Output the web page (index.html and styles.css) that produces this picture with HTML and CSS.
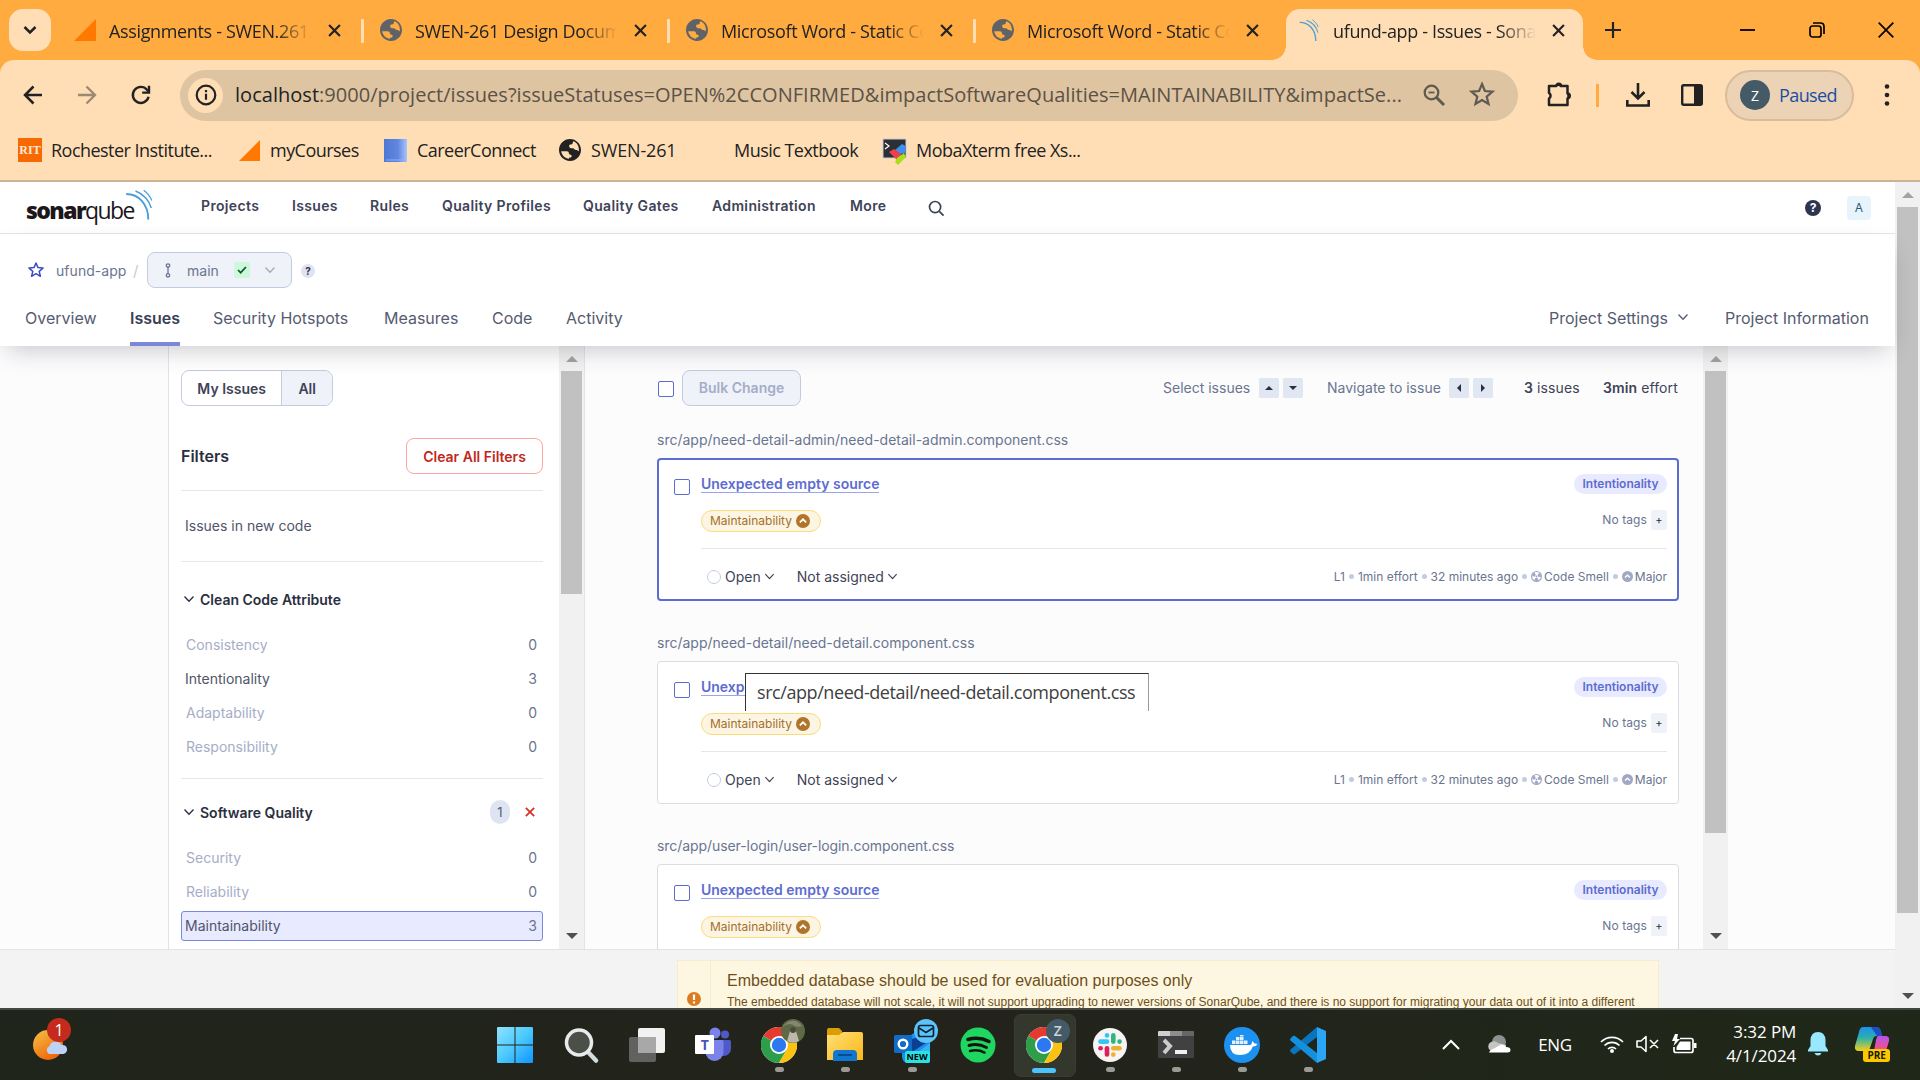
FILE: index.html
```
<!DOCTYPE html>
<html lang="en">
<head>
<meta charset="utf-8">
<title>ufund-app - Issues - SonarQube</title>
<link rel="stylesheet" href="styles.css">
</head>
<body>
<svg class="defs" width="0" height="0" aria-hidden="true">
  <defs>
    <linearGradient id="gSun" x1="0" y1="0" x2=".6" y2="1"><stop offset="0" stop-color="#f6c244"/><stop offset="1" stop-color="#f0650a"/></linearGradient>
    <linearGradient id="gWin" gradientUnits="userSpaceOnUse" x1="0" y1="0" x2="36" y2="36"><stop offset="0" stop-color="#8fe3ff"/><stop offset=".5" stop-color="#4cc9fd"/><stop offset="1" stop-color="#0f95ff"/></linearGradient>
    <linearGradient id="gFolder" x1="0" y1="0" x2="1" y2="1"><stop offset="0" stop-color="#ffdf7a"/><stop offset="1" stop-color="#fbb813"/></linearGradient>
    <linearGradient id="gCop1" x1="0" y1="0" x2="0" y2="1"><stop offset="0" stop-color="#1b8ff5"/><stop offset=".45" stop-color="#2db0a8"/><stop offset="1" stop-color="#f5d020"/></linearGradient>
    <linearGradient id="gCop2" x1="0" y1="0" x2="0" y2="1"><stop offset="0" stop-color="#b355f0"/><stop offset=".6" stop-color="#f0508c"/><stop offset="1" stop-color="#ff9a3c"/></linearGradient>
    <linearGradient id="gCareer" x1="0" y1="0" x2="1" y2="0"><stop offset="0" stop-color="#4f78d6"/><stop offset=".6" stop-color="#5f86e0"/><stop offset="1" stop-color="#a9c4fb"/></linearGradient>
    <symbol id="globe" viewBox="2 2 20 20"><path d="M12 2C6.480 2 2 6.480 2 12s4.480 10 10 10 10-4.480 10-10S17.520 2 12 2zm8.100 10c0 .4-.1.9-.2 1.300-.6-.8-1.400-1.300-2.400-1.300-1.200 0-1.700-1.700-3-1.700h-1.500c-1 0-1.800-.9-1.800-1.900 0-1 .8-1.400 1.800-1.400.9 0 1.500-.6 1.500-1.500 0-.6.2-1.100.6-1.500 2.900 1 5 3.700 5 8zM4 13.200h5.200c1.200 0 1.800.8 1.800 1.800 0 .8.700 1.300 1.500 1.300.8 0 1 .7 1 1.400 0 .9-.7 1.200-1.500 1.200-.7 0-.9.5-.9 1.100C7.400 19.700 4.500 16.900 4 13.200z"/></symbol>
    <symbol id="x" viewBox="0 0 12 12"><path d="M1 1l10 10M11 1L1 11" fill="none" stroke="currentColor" stroke-width="2"/></symbol>
    <symbol id="chev" viewBox="0 0 12 12"><path d="M1.500 3.500L6 8.300l4.500-4.800" fill="none" stroke="currentColor" stroke-width="1.300"/></symbol>
    <symbol id="waves" viewBox="0 0 24 26"><g fill="none" stroke="#4b9fd5" stroke-width="1.600"><path d="M1 4C12 4 20 13 20 26"/><path d="M9 1.500C16 4 21 10 22.500 16" stroke-width="1.300"/><path d="M16 .8C19 3 21.500 6 23 9.500" stroke-width="1.100"/></g></symbol>
    <symbol id="chrome" viewBox="0 0 36 36"><circle cx="18" cy="18" r="18" fill="#fff"/><path d="M18 18L2.400 9A18 18 0 0 1 33.600 9H18z" fill="#e53a2f"/><path d="M18 18L2.400 9A18 18 0 0 0 18 36l7.800-13.500z" fill="#2f9e4a"/><path d="M18 9h15.600A18 18 0 0 1 18 36l7.800-13.500z" fill="#fcc212"/><circle cx="18" cy="18" r="9" fill="#fff"/><circle cx="18" cy="18" r="7.200" fill="#2b78f0"/></symbol>
    <symbol id="up" viewBox="0 0 14 14"><circle cx="7" cy="7" r="7" fill="currentColor"/><path d="M3.800 8.400L7 5.300l3.200 3.100" fill="none" stroke="#fff" stroke-width="1.700"/></symbol>
    <symbol id="smell" viewBox="0 0 12 12"><circle cx="6" cy="6" r="5.400" fill="none" stroke="currentColor" stroke-width="1.200"/><circle cx="6" cy="6" r="1" fill="currentColor"/><circle cx="6" cy="6" r="3.300" fill="none" stroke="currentColor" stroke-width="3.200" stroke-dasharray="3.456 3.456" transform="rotate(60 6 6)"/></symbol>
  </defs>
</svg>

<header class="browser">
  <div class="strip">
    <button class="tab-search"><svg width="14" height="14" viewBox="0 0 14 14"><path d="M1.500 4L7 9.500 12.500 4" fill="none" stroke="#222" stroke-width="2.500"/></svg></button>
    <div class="tab"><svg class="fav" viewBox="0 0 22 22"><path d="M0 22L22 0v22z" fill="#ff7900"/></svg><span class="tab-title">Assignments - SWEN.261.01</span><svg class="close"><use href="#x"/></svg></div>
    <div class="tab"><svg class="fav globe"><use href="#globe"/></svg><span class="tab-title">SWEN-261 Design Documentation</span><svg class="close"><use href="#x"/></svg></div>
    <div class="tab"><svg class="fav globe"><use href="#globe"/></svg><span class="tab-title">Microsoft Word - Static Code</span><svg class="close"><use href="#x"/></svg></div>
    <div class="tab last"><svg class="fav globe"><use href="#globe"/></svg><span class="tab-title">Microsoft Word - Static Code</span><svg class="close"><use href="#x"/></svg></div>
    <div class="tab active"><svg class="fav" viewBox="0 0 24 26"><use href="#waves"/></svg><span class="tab-title">ufund-app - Issues - SonarQube</span><svg class="close"><use href="#x"/></svg></div>
    <svg class="plus" viewBox="0 0 16 16"><path d="M8 0v16M0 8h16" stroke="#222" stroke-width="2.200"/></svg>
    <div class="win">
      <svg width="16" height="16" viewBox="0 0 16 16"><path d="M0 8h15" stroke="#000" stroke-width="1.800"/></svg>
      <svg width="16" height="16" viewBox="0 0 16 16"><g fill="none" stroke="#000" stroke-width="1.700"><rect x="1" y="4" width="11" height="11" rx="2.500"/><path d="M4 1h7.500Q15 1 15 4.500V12"/></g></svg>
      <svg width="16" height="16" viewBox="0 0 16 16"><path d="M.7.7l14.600 14.600M15.300.7L.7 15.300" stroke="#000" stroke-width="1.700"/></svg>
    </div>
  </div>

  <div class="chrome-body">
    <div class="toolbar">
      <svg class="nav-ico" viewBox="0 0 20 20"><path d="M19 10H2.500M10.500 1.500L2 10l8.500 8.500" fill="none" stroke="#222" stroke-width="2.500"/></svg>
      <svg class="nav-ico dim" viewBox="0 0 20 20"><path d="M1 10h16.500M9.500 1.500L18 10l-8.500 8.500" fill="none" stroke="#222" stroke-width="2.300"/></svg>
      <svg class="nav-ico" viewBox="0 0 20 20"><path d="M17.600 11.800A8 8 0 1 1 16 4.800L18 7" fill="none" stroke="#222" stroke-width="2.400"/><path d="M19.200.8v8h-8V6.400h5.600V.8z" fill="#222"/></svg>
      <div class="omnibox">
        <span class="site-info"><svg width="22" height="22" viewBox="0 0 22 22"><circle cx="11" cy="11" r="9.300" fill="none" stroke="#222" stroke-width="2.200"/><path d="M11 9.700v6M11 6v2.200" stroke="#222" stroke-width="2.200"/></svg></span>
        <span class="url"><b>localhost</b>:9000/project/issues?issueStatuses=OPEN%2CCONFIRMED&amp;impactSoftwareQualities=MAINTAINABILITY&amp;impactSe...</span>
        <svg class="o-zoom" viewBox="0 0 22 22"><circle cx="8.500" cy="8.500" r="6.800" fill="none" stroke="#5f5a52" stroke-width="2.300"/><path d="M13.500 13.500l7.500 7.500" stroke="#5f5a52" stroke-width="3"/><path d="M5.500 8.500h6" stroke="#5f5a52" stroke-width="1.800"/></svg>
        <svg class="o-star" viewBox="0 0 24 24"><path d="M12 2l2.900 7 7.600.6-5.800 5 1.800 7.400L12 18l-6.500 4 1.800-7.400-5.800-5 7.600-.6z" fill="none" stroke="#5f5a52" stroke-width="2.200"/></svg>
      </div>
      <svg class="puzzle" viewBox="0 0 26 26"><path d="M3 5h7a3 3 0 0 1 5 0h6.500v7.500a3 3 0 0 1 0 5V24H3v-6.500a3.200 3.200 0 0 0 0-5.500z" fill="none" stroke="#222" stroke-width="2.500" stroke-linejoin="round"/><path d="M9.300 5a3.500 3.500 0 0 1 7 0zM21.500 11.200a3.500 3.500 0 0 1 0 7z" fill="#222"/></svg>
      <i class="tb-sep"></i>
      <svg class="download" viewBox="0 0 24 24"><path d="M12 0v15M5.500 9L12 15.500 18.500 9M1.300 17v5.500h21.400V17" fill="none" stroke="#222" stroke-width="2.600"/></svg>
      <svg class="side" viewBox="0 0 22 22"><rect x="1.200" y="1.200" width="19.600" height="19.600" rx="1.500" fill="none" stroke="#222" stroke-width="2.400"/><path d="M13 1h8v20h-8z" fill="#222"/></svg>
      <div class="profile"><span class="avatar">Z</span><span class="paused">Paused</span></div>
      <svg class="dots" viewBox="0 0 6 22"><g fill="#222"><circle cx="3" cy="2.500" r="2.300"/><circle cx="3" cy="11" r="2.300"/><circle cx="3" cy="19.500" r="2.300"/></g></svg>
    </div>
    <div class="bookmarks">
      <div class="bm b1"><span class="rit">RIT</span><span>Rochester Institute...</span></div>
      <div class="bm b2"><svg width="21" height="21" viewBox="0 0 22 22"><path d="M0 22L22 0v22z" fill="#ff7900"/></svg><span>myCourses</span></div>
      <div class="bm b3"><svg width="23" height="23" viewBox="0 0 23 23"><rect width="23" height="23" fill="url(#gCareer)"/><path d="M2 21h19" stroke="#8fb0f5"/></svg><span>CareerConnect</span></div>
      <div class="bm b4"><svg width="22" height="22" fill="#222"><use href="#globe"/></svg><span>SWEN-261</span></div>
      <div class="bm b5"><span>Music Textbook</span></div>
      <div class="bm b6"><svg width="23" height="23" viewBox="0 0 23 23"><path d="M0 0h23v19H0z" fill="#2c2f33" stroke="#c9ccd2"/><path d="M2 4l4 3-4 3" fill="none" stroke="#fff" stroke-width="1.200"/><path d="M12 11l7-6 4 2-1 7-5 1z" fill="#3f8ef0"/><path d="M6 13l5-3 8 6-4 6z" fill="#f0404a"/><path d="M14 19l7-5 2 4-8 8-3-3z" fill="#a5e01a"/></svg><span>MobaXterm free Xs...</span></div>
    </div>
  </div>
</header>

<main class="viewport">
  <div class="page">
    <nav class="sonar-nav">
      <div class="logo"><b>sonar</b><span>qube</span><svg width="28" height="33" viewBox="0 0 24 26"><use href="#waves"/></svg></div>
      <a class="n1">Projects</a><a class="n2">Issues</a><a class="n3">Rules</a><a class="n4">Quality Profiles</a><a class="n5">Quality Gates</a><a class="n6">Administration</a><a class="n7">More</a>
      <svg class="search" viewBox="0 0 18 18"><circle cx="7.500" cy="7.500" r="5.900" fill="none" stroke="#3e4357" stroke-width="1.800"/><path d="M12 12l4.500 4.500" stroke="#3e4357" stroke-width="1.900"/></svg>
      <span class="help">?</span>
      <span class="user">A</span>
    </nav>
    <section class="project-head">
      <div class="crumbs">
        <svg width="16" height="16" viewBox="0 0 16 16"><path d="M8 1l2 4.600 5 .5-3.800 3.300L12.400 14.300 8 11.700l-4.400 2.600 1.200-4.900L1 6.100l5-.5z" fill="none" stroke="#3d4ac4" stroke-width="1.500" stroke-linejoin="round"/></svg>
        <span class="proj">ufund-app</span><span class="slash">/</span>
        <div class="branch">
          <svg width="8" height="15" viewBox="0 0 8 15"><g fill="none" stroke="#6a7590" stroke-width="1.300"><circle cx="4" cy="2.500" r="1.700"/><circle cx="4" cy="12.300" r="1.700"/><path d="M4 4v7"/></g></svg>
          <span class="bname">main</span>
          <span class="ok"><svg width="10" height="8" viewBox="0 0 10 8"><path d="M1 4l2.700 2.700L9 1" fill="none" stroke="#0d5a30" stroke-width="1.700"/></svg></span>
          <svg class="bchev"><use href="#chev"/></svg>
        </div>
        <span class="qmark">?</span>
      </div>
      <div class="ptabs">
        <a class="p1">Overview</a><a class="p2 on">Issues</a><a class="p3">Security Hotspots</a><a class="p4">Measures</a><a class="p5">Code</a><a class="p6">Activity</a>
        <a class="p7">Project Settings</a><svg width="12" height="12"><use href="#chev"/></svg><a class="p8">Project Information</a>
      </div>
    </section>

    <div class="content">
      <aside class="side-panel">
        <div class="filters">
          <div class="toggle"><span>My Issues</span><span class="sel">All</span></div>
          <div class="filters-head"><b>Filters</b><button>Clear All Filters</button></div>
          <div class="new-code">Issues in new code</div>
          <div class="facet">
            <div class="facet-title"><svg width="12" height="12"><use href="#chev"/></svg><b>Clean Code Attribute</b></div>
            <div class="row off"><span>Consistency</span><i>0</i></div>
            <div class="row"><span>Intentionality</span><i>3</i></div>
            <div class="row off"><span>Adaptability</span><i>0</i></div>
            <div class="row off"><span>Responsibility</span><i>0</i></div>
          </div>
          <div class="facet second">
            <div class="facet-title"><svg width="12" height="12"><use href="#chev"/></svg><b>Software Quality</b><span class="count">1</span><svg class="clear" width="10" height="10"><use href="#x"/></svg></div>
            <div class="row off"><span>Security</span><i>0</i></div>
            <div class="row off"><span>Reliability</span><i>0</i></div>
            <div class="row picked"><span>Maintainability</span><i>3</i></div>
          </div>
        </div>
        <div class="sbar side-sb"><i class="au"></i><i class="thumb"></i><i class="ad"></i></div>
      </aside>

      <section class="issues">
        <div class="bulk">
          <span class="cb"></span><span class="bulk-btn">Bulk Change</span>
          <span class="lbl sel-l">Select issues</span><span class="key"><i class="k-up"></i></span><span class="key"><i class="k-dn"></i></span>
          <span class="lbl nav-l">Navigate to issue</span><span class="key"><i class="k-lf"></i></span><span class="key"><i class="k-rt"></i></span>
          <span class="tot"><b>3</b> issues</span><span class="eff"><b>3min</b> effort</span>
        </div>

        <div class="path">src/app/need-detail-admin/need-detail-admin.component.css</div>
        <article class="card current">
          <span class="cb"></span>
          <div class="card-body">
            <div class="r1"><a>Unexpected empty source</a><span class="attr">Intentionality</span></div>
            <div class="r2"><span class="pill">Maintainability<svg width="14" height="14"><use href="#up"/></svg></span><span class="tags">No tags</span><span class="add">+</span></div>
            <div class="r3"><i class="ring"></i><span>Open</span><svg width="11" height="11"><use href="#chev"/></svg><span class="assignee">Not assigned</span><svg width="11" height="11"><use href="#chev"/></svg>
              <div class="meta"><span>L1</span><i></i><span>1min effort</span><i></i><span>32 minutes ago</span><i></i><svg width="11" height="11"><use href="#smell"/></svg><span>Code Smell</span><i></i><svg width="11" height="11"><use href="#up"/></svg><span>Major</span></div></div>
          </div>
        </article>

        <div class="path">src/app/need-detail/need-detail.component.css</div>
        <article class="card">
          <span class="cb"></span>
          <div class="card-body">
            <div class="r1"><a>Unexpected empty source</a><span class="attr">Intentionality</span></div>
            <div class="r2"><span class="pill">Maintainability<svg width="14" height="14"><use href="#up"/></svg></span><span class="tags">No tags</span><span class="add">+</span></div>
            <div class="r3"><i class="ring"></i><span>Open</span><svg width="11" height="11"><use href="#chev"/></svg><span class="assignee">Not assigned</span><svg width="11" height="11"><use href="#chev"/></svg>
              <div class="meta"><span>L1</span><i></i><span>1min effort</span><i></i><span>32 minutes ago</span><i></i><svg width="11" height="11"><use href="#smell"/></svg><span>Code Smell</span><i></i><svg width="11" height="11"><use href="#up"/></svg><span>Major</span></div></div>
          </div>
          <div class="tooltip">src/app/need-detail/need-detail.component.css</div>
        </article>

        <div class="path login">src/app/user-login/user-login.component.css</div>
        <article class="card">
          <span class="cb"></span>
          <div class="card-body">
            <div class="r1"><a>Unexpected empty source</a><span class="attr">Intentionality</span></div>
            <div class="r2"><span class="pill">Maintainability<svg width="14" height="14"><use href="#up"/></svg></span><span class="tags">No tags</span><span class="add">+</span></div>
          </div>
        </article>
      </section>
      <div class="sbar main-sb"><i class="au"></i><i class="thumb"></i><i class="ad"></i></div>
    </div>

    <footer class="foot">
      <div class="warn">
        <div class="warn-ico"><svg width="14" height="14" viewBox="0 0 14 14"><circle cx="7" cy="7" r="7" fill="#dc7a1e"/><path d="M7 2.500v5.500M7 9.500v2" stroke="#fff" stroke-width="2.200"/></svg></div>
        <div class="warn-text"><h3>Embedded database should be used for evaluation purposes only</h3><p>The embedded database will not scale, it will not support upgrading to newer versions of SonarQube, and there is no support for migrating your data out of it into a different</p></div>
      </div>
    </footer>
  </div>
  <div class="sbar page-sb"><i class="au"></i><i class="thumb"></i><i class="ad"></i></div>
</main>

<div class="taskbar">
  <div class="weather"><svg width="38" height="46" viewBox="0 0 38 46"><circle cx="15" cy="28" r="15" fill="url(#gSun)"/><path d="M16 37a4.500 4.500 0 0 1 .5-8 6.500 6.500 0 0 1 12-1 4.600 4.600 0 0 1 2 9z" fill="#bcd3f7"/></svg><span>1</span></div>
  <div class="apps">
    <div class="app"><svg width="36" height="36" viewBox="0 0 36 36"><path d="M0 1a1 1 0 0 1 1-1h16.500v17.500H0zM18.500 0H35a1 1 0 0 1 1 1v16.500H18.500zM0 18.500h17.500V36H1a1 1 0 0 1-1-1zM18.500 18.500H36V35a1 1 0 0 1-1 1H18.500z" fill="url(#gWin)"/></svg></div>
    <div class="app"><svg width="36" height="36" viewBox="0 0 36 36"><path d="M25 25l8 8.500" stroke="#d3dbe0" stroke-width="4.500" stroke-linecap="round"/><circle cx="16" cy="15.500" r="12.500" fill="#4c4f48" stroke="#e8ebec" stroke-width="3.500"/></svg></div>
    <div class="app"><svg width="36" height="36" viewBox="0 0 36 36"><rect x="9" y="1" width="27" height="25" rx="2" fill="#f1f1f1"/><rect x="0" y="10" width="27" height="25" rx="2" fill="#6c6c6c" opacity=".85"/><path d="M9 10h18v16H9z" fill="#a8a8a8"/></svg></div>
    <div class="app"><svg width="36" height="36" viewBox="0 0 36 36"><circle cx="30" cy="7.500" r="4" fill="#5059c9"/><path d="M23 13h11.500a1.500 1.500 0 0 1 1.500 1.500V22a7 7 0 0 1-9 6.700z" fill="#5059c9"/><circle cx="20" cy="6" r="5.500" fill="#7b83eb"/><path d="M11 13h16a1.500 1.500 0 0 1 1.500 1.500V25a9 9 0 0 1-18 0z" fill="#7b83eb"/><rect x="0" y="8" width="19" height="19" rx="1" fill="#fff"/></svg><span class="tm">T</span></div>
    <div class="app run"><svg width="36" height="36"><use href="#chrome"/></svg><svg class="badge" width="24" height="24" viewBox="0 0 24 24"><circle cx="12" cy="12" r="12" fill="#5d6a45"/><path d="M10 9h4l4 13a12 12 0 0 1-12 0z" fill="#bdb7ac"/><path d="M1 8Q8 3 12 6t9 1Q12-4 1 8z" fill="#86876f"/><circle cx="12" cy="11" r="3" fill="#4c4a40"/></svg></div>
    <div class="app run"><svg width="36" height="36" viewBox="0 0 36 36"><path d="M0 3q0-2 2-2h10l3 3v6H0z" fill="#dd9d05"/><path d="M0 8h12l4-3h18q2 0 2 2v26H0z" fill="url(#gFolder)"/><path d="M6 34v-7q0-4 4-4h16q4 0 4 4v7z" fill="#0f77cf"/><path d="M11 28h14" stroke="#0a4b8f" stroke-width="2"/></svg></div>
    <div class="app run"><svg width="36" height="36" viewBox="0 0 36 36"><path d="M8 14L26 2l10 10v20q0 4-4 4H14q-5 0-6-6z" fill="#1d8fe8"/><path d="M18 12l14-4v8L18 25z" fill="#0c3f92"/><path d="M20 28l16-12v16q0 4-4 4H12z" fill="#32b5f2"/><rect x="0" y="8" width="18" height="18" rx="1.500" fill="#0f6cc9"/><circle cx="9" cy="17" r="4.300" fill="none" stroke="#fff" stroke-width="2.400"/></svg><svg class="mail" width="24" height="24" viewBox="0 0 24 24"><circle cx="12" cy="12" r="12" fill="#5cc4fb"/><rect x="4.500" y="6.500" width="15" height="11" rx="2" fill="none" stroke="#0c2432" stroke-width="1.700"/><path d="M5 9l7 4.500L19 9" fill="none" stroke="#0c2432" stroke-width="1.700"/></svg><span class="new">NEW</span></div>
    <div class="app"><svg width="36" height="36" viewBox="0 0 36 36"><circle cx="18" cy="18" r="17.500" fill="#1fd661"/><g fill="none" stroke="#12160f" stroke-linecap="round"><path d="M8 12.500q11-3.300 21 2" stroke-width="3.600"/><path d="M9 18.500q9-2.600 17.500 2" stroke-width="2.900"/><path d="M10 24q8-2 14.500 1.600" stroke-width="2.400"/></g></svg></div>
    <div class="app run now"><svg width="36" height="36"><use href="#chrome"/></svg><span class="badge z">Z</span></div>
    <div class="app run"><svg width="36" height="36" viewBox="0 0 36 36"><circle cx="18" cy="18" r="17" fill="#f5f3f4"/><g stroke-width="4.600" stroke-linecap="round" fill="none"><path d="M15 14.600H8.500" stroke="#36c5f0"/><path d="M15 8.400v.1" stroke="#36c5f0"/><path d="M21.300 8.400v6.200" stroke="#2eb67d"/><path d="M27.500 14.600h.1" stroke="#2eb67d"/><path d="M21.300 21.200h6.200" stroke="#ecb22e"/><path d="M21.300 27.500v.1" stroke="#ecb22e"/><path d="M15 21.200v6.300" stroke="#e01e5a"/><path d="M8.500 21.200h.1" stroke="#e01e5a"/></g></svg></div>
    <div class="app run"><svg width="36" height="36" viewBox="0 0 36 36"><rect y="4" width="36" height="27" rx="1.500" fill="#414141"/><path d="M0 5q0-1 1-1h11v5H0z" fill="#cfcfcf"/><path d="M12 4h12v5H12z" fill="#8e8e8e"/><path d="M24 4h11q1 0 1 1v4H24z" fill="#666"/><path d="M6 13l6 6-6 7" fill="none" stroke="#ccc" stroke-width="4"/><path d="M17 25h12" stroke="#f0f0f0" stroke-width="4"/></svg></div>
    <div class="app run"><svg width="36" height="36" viewBox="0 0 36 36"><circle cx="18" cy="18" r="18" fill="#1d91f0"/><path d="M6 18h20q2 0 2-4 2 1 2.300 2.500 2-.3 3 .5-1 2.500-4.500 2.500Q26 28 16 28 6 28 6 18z" fill="#fff"/><path d="M8 13.500h3.500V17H8zM12 13.500h3.500V17H12zM16 13.500h3.500V17H16zM20 13.500h3.500V17H20zM12 10h3.500v3H12zM16 10h3.500v3H16zM16 8h3.500v1.500H16z" fill="#e3f1fd"/></svg></div>
    <div class="app run"><svg width="36" height="36" viewBox="0 0 36 36"><path d="M27 0v10L5 27q-1 .5-2 0l-2.500-2.500q-1-1 0-2z" fill="#0a74bd"/><path d="M27 36V26L5 9q-1-.5-2 0L.5 11.500q-1 1 0 2z" fill="#1490dd"/><path d="M27 0l9 4v28l-9 4z" fill="#2ba6f4"/></svg></div>
  </div>
  <div class="tray">
    <svg class="y1" width="18" height="11" viewBox="0 0 18 11"><path d="M1 10l8-8 8 8" fill="none" stroke="#fff" stroke-width="2"/></svg>
    <svg class="y2" width="25" height="17" viewBox="0 0 25 17"><circle cx="13" cy="6" r="7" fill="#8f9090"/><path d="M5 15a5 5 0 0 1 0-9q4-2 7 1l8 2v6z" fill="#c4c4c4"/><path d="M3 16.500q1-3 5-4l7-4q4 0 5 2.500 4.500 0 4.500 3 0 2.500-3 2.500z" fill="#fff"/></svg>
    <span class="eng">ENG</span>
    <svg class="y3" width="24" height="18" viewBox="0 0 24 18"><g fill="none" stroke="#fff" stroke-width="1.700"><path d="M1 7a15.500 15.500 0 0 1 22 0"/><path d="M4.500 10.500a10.600 10.600 0 0 1 15 0"/><path d="M8 14a5.700 5.700 0 0 1 8 0"/></g><circle cx="12" cy="16" r="2" fill="#fff"/></svg>
    <svg class="y4" width="24" height="18" viewBox="0 0 24 18"><path d="M1 6h4l5-4.500v15L5 12H1zM14 5l8 8M22 5l-8 8" fill="none" stroke="#fff" stroke-width="1.600" stroke-linejoin="round"/></svg>
    <svg class="y5" width="25" height="20" viewBox="0 0 25 20"><path d="M8 4.500h11q2 0 2 2v10q0 2-2 2H4q-2 0-2-2V13" fill="none" stroke="#fff" stroke-width="1.700"/><path d="M8 7.500h10.500V16H4.500v-3zM22 9h2.500v5H22zM6 0H3L0 7h3l-1.500 5L8 5H5z" fill="#fff"/></svg>
    <div class="clock"><span>3:32 PM</span><span>4/1/2024</span></div>
    <svg class="y6" width="20" height="24" viewBox="0 0 20 24"><path d="M10 0q7 0 7.500 8v6l2.500 4v1.500H0V18l2.500-4V8Q3 0 10 0zM6.500 21h7q-1 2.500-3.500 2.500T6.500 21z" fill="#98e8ff"/></svg>
    <div class="copilot"><svg width="35" height="34" viewBox="0 0 35 34"><path d="M8 0h13q4 0 5 5l1 4h-6q-2 0-3 3l-3 9q-1 3-4 3H4q-5 0-4-5L4 5q1-5 4-5z" fill="url(#gCop1)"/><path d="M16 0h5q4 0 5 5l1 4h-5z" fill="#1c4fc4"/><path d="M23 9h7q5 0 4 5l-3 10q-2 5-6 5H15q3-1 4-5l2-11q1-4 2-4z" fill="url(#gCop2)"/></svg><span>PRE</span></div>
  </div>
</div>
</body>
</html>
```
FILE: styles.css
```
* { box-sizing: border-box; }
body {
  margin: 0; width: 1920px; height: 1080px; overflow: hidden;
  display: flex; flex-direction: column;
  font-family: Inter, "Liberation Sans", sans-serif; font-size: 14px; color: #3e4357; background: #fff;
}
i { font-style: normal; }
svg { flex: none; display: block; overflow: visible; }
.defs { position: absolute; }
span, a, b { white-space: nowrap; }

/* browser chrome */
.browser { flex: none; height: 182px; background: #ffab40; font-family: "Open Sans", "Noto Sans", sans-serif; color: #222; }
.strip { height: 60px; display: flex; align-items: center; padding-left: 9px; }
.tab-search { width: 42px; height: 42px; border: 0; border-radius: 14px; background: #ffdeb6; margin-right: 6px; padding: 0; display: flex; align-items: center; justify-content: center; }
.tab { position: relative; flex: none; width: 306px; height: 60px; display: flex; align-items: center; padding-left: 17px; }
.tab:not(.last):not(.active)::after { content: ""; position: absolute; right: -1px; top: 19px; width: 3px; height: 24px; border-radius: 1px; background: #ffdeb6; }
.fav { width: 22px; height: 22px; }
.globe { fill: #5f6368; }
.tab-title { width: 203px; margin: 2px 0 0 13px; font-size: 18px; letter-spacing: -.35px; overflow: hidden; -webkit-mask-image: linear-gradient(90deg, #000 82%, transparent 100%); mask-image: linear-gradient(90deg, #000 82%, transparent 100%); }
.close { width: 13px; height: 13px; margin-left: 16px; color: #222; }
.tab.active { isolation: isolate; }
.tab.active::before { content: ""; position: absolute; z-index: -1; left: 5px; right: 4px; top: 9px; bottom: 0; border-radius: 14px 14px 0 0; background: #ffdeb6; }
.tab.active::after { content: ""; position: absolute; z-index: -1; left: -9px; right: -10px; bottom: 0; height: 14px;
  background: radial-gradient(circle at 0 0, transparent 13.500px, #ffdeb6 14px) left / 14px 14px no-repeat, radial-gradient(circle at 14px 0, transparent 13.500px, #ffdeb6 14px) right / 14px 14px no-repeat; }
.plus { width: 16px; height: 16px; margin-left: 18px; }
.win { margin-left: auto; display: flex; gap: 53px; padding-right: 26px; }
.chrome-body { height: 122px; background: #ffdeb6; border-radius: 14px 14px 0 0; border-bottom: 2px solid #cdb391; }
.toolbar { height: 70px; display: flex; align-items: center; padding-left: 23px; }
.nav-ico { width: 20px; height: 20px; margin-right: 34px; }
.dim { opacity: .45; }
.nav-ico + .omnibox { margin-left: -5px; }
.omnibox { width: 1338px; height: 51px; border-radius: 26px; background: #dec4a1; display: flex; align-items: center; padding-left: 8px; }
.site-info { width: 35px; height: 35px; border-radius: 50%; background: #ffdeb6; display: flex; align-items: center; justify-content: center; }
.url { width: 1168px; margin: -2px 0 0 12px; font-size: 20px; letter-spacing: .03px; color: #5b5247; }
.url b { font-weight: 400; color: #222; }
.o-zoom { width: 22px; height: 22px; margin-left: 20px; }
.o-star { width: 24px; height: 24px; margin: -2px 0 0 25px; }
.puzzle { width: 26px; height: 26px; margin: -3px 0 0 28px; }
.tb-sep { width: 3px; height: 23px; background: #ffab40; margin-left: 24px; }
.download { width: 24px; height: 24px; margin-left: 27px; }
.side { width: 22px; height: 22px; margin-left: 31px; }
.profile { width: 129px; height: 51px; margin-left: 22px; border: 2px solid #d8bd9c; border-radius: 26px; background: #edd3b5; display: flex; align-items: center; padding-left: 13px; }
.avatar { width: 30px; height: 30px; border-radius: 50%; background: #445a66; color: #fff; display: flex; align-items: center; justify-content: center; font-size: 14px; }
.paused { margin: -1px 0 0 9px; font-size: 18px; letter-spacing: -.6px; color: #174ea6; }
.dots { width: 6px; height: 22px; margin-left: 30px; }
.bookmarks { height: 40px; display: flex; align-items: center; padding-left: 18px; font-size: 18px; letter-spacing: -.53px; }
.bm { display: flex; align-items: center; }
.bm svg + span { margin-left: 10px; }
.bm span { position: static; margin-top: -1px; }
.b1 { width: 221px; } .b2 { width: 145px; } .b3 { width: 175px; } .b4 { width: 175px; letter-spacing: -.15px; } .b5 { width: 149px; }
.bm .rit { width: 24px; height: 24px; margin: 0 9px 0 0; background: #f76902; color: #ffe9d6; font: 700 12px/24px "Liberation Serif", serif; letter-spacing: 0; text-align: center; }

/* scrollbars */
.sbar { flex: none; width: 25px; background: #f1f1f1; display: flex; flex-direction: column; align-items: center; }
.au, .ad { width: 0; height: 0; border: 6px solid transparent; border-top: 0; border-bottom: 6px solid #a3a3a3; margin: 10px 0 9px; }
.ad { border-bottom: 0; border-top: 6px solid #505050; margin: auto 0 10px; }
.thumb { width: 21px; background: #c1c1c1; }
.page-sb .thumb { height: 706px; } .side-sb .thumb { height: 223px; } .main-sb .thumb { height: 462px; }
.page-sb .ad { margin-bottom: 9px; }

/* page */
.viewport { flex: none; height: 826px; display: flex; overflow: hidden; }
.page { width: 1895px; display: flex; flex-direction: column; }
.sonar-nav { height: 52px; border-bottom: 1px solid #e6e6e8; display: flex; align-items: center; padding-left: 26px; font-weight: 600; }
.sonar-nav a { line-height: 20px; margin-top: -3px; letter-spacing: .35px; }
.logo { width: 175px; display: flex; align-items: flex-end; height: 44px; padding-bottom: 3px; font-family: "Open Sans", sans-serif; color: #1b171b; font-size: 23px; line-height: 34px; letter-spacing: -1.600px; }
.logo b { font-weight: 800; } .logo span { font-weight: 400; }
.logo svg { margin: 0 0 6px -9px; }
.n1 { width: 91px; } .n2 { width: 78px; } .n3 { width: 72px; } .n4 { width: 141px; } .n5 { width: 129px; } .n6 { width: 138px; } .n7 { width: 78px; }
.search { width: 17px; height: 17px; margin-top: 2px; }
.help { width: 16px; height: 16px; margin-left: 860px; border-radius: 50%; background: #2f3550; color: #fff; font-size: 12px; font-weight: 700; line-height: 16px; text-align: center; }
.user { width: 24px; height: 24px; margin-left: 26px; border-radius: 4px; background: #e8f4fb; color: #2d5a7a; font-size: 12px; font-weight: 400; line-height: 24px; text-align: center; }
.project-head { position: relative; z-index: 2; height: 112px; background: #fff; box-shadow: 0 10px 24px -7px rgba(20, 20, 40, .24); }
.crumbs { display: flex; align-items: center; padding: 18px 0 0 28px; height: 54px; font-size: 14px; color: #6a7590; }
.proj { width: 77px; margin-left: 12px; letter-spacing: .05px; }
.slash { width: 14px; color: #c5cad8; font-size: 15px; }
.branch { width: 145px; height: 36px; border: 1px solid #c3cae2; border-radius: 8px; background: #eff2f9; display: flex; align-items: center; padding-left: 16px; }
.bname { width: 47px; margin-left: 15px; }
.ok { width: 16px; height: 16px; border-radius: 2px; background: #cdf8dc; display: flex; align-items: center; justify-content: center; }
.bchev { width: 12px; height: 12px; margin-left: 14px; color: #a3aabd; }
.qmark { width: 14px; height: 14px; margin-left: 9px; margin-top: 2px; border-radius: 50%; background: #dfe4f2; color: #2f3550; font-size: 10px; font-weight: 700; line-height: 14px; text-align: center; }
.ptabs { display: flex; height: 58px; align-items: center; padding-left: 25px; font-size: 16px; color: #565b70; }
.ptabs a { height: 58px; line-height: 60px; flex: none; }
.ptabs .on { width: 50px; margin-right: 33px; font-weight: 600; color: #3a3f55; border-bottom: 4px solid #7b87d9; }
.p1 { width: 105px; } .p3 { width: 171px; } .p4 { width: 108px; } .p5 { width: 74px; } .p6 { width: 983px; } .p7 { width: 128px; } .p8 { margin-left: 36px; }
.content { height: 603px; display: flex; background: #fcfcfd; overflow: hidden; }
.side-panel { margin-left: 168px; width: 417px; border: 1px solid #e1e4f0; border-width: 0 1px; background: #fff; display: flex; justify-content: space-between; }
.filters { width: 374px; padding: 24px 0 0 12px; }
.toggle { width: 152px; height: 36px; border: 1px solid #c3cae2; border-radius: 8px; display: flex; overflow: hidden; font-weight: 600; line-height: 35px; text-align: center; }
.toggle span { width: 100px; } .toggle .sel { width: 51px; background: #eff2f9; border-left: 1px solid #c3cae2; }
.filters-head { display: flex; justify-content: space-between; align-items: center; margin-top: 32px; color: #2a2f40; font-size: 16px; }
.filters-head b { font-weight: 600; }
.filters-head button { width: 137px; height: 36px; padding: 0; border: 1px solid #fba8a0; border-radius: 8px; background: #fff; color: #c0281c; font: 600 14px Inter, sans-serif; }
.new-code { margin-top: 16px; height: 72px; border: 1px solid #e6e7ea; border-width: 1px 0; padding-left: 4px; line-height: 70px; color: #50556a; }
.facet { padding-top: 23px; height: 217px; border-bottom: 1px solid #e6e7ea; }
.facet-title { display: flex; align-items: center; height: 28px; padding-left: 2px; margin-bottom: 15px; color: #2a2f40; }
.facet-title b { margin-left: 5px; font-weight: 600; width: 283px; }
.count { margin-left: 7px; width: 20px; height: 24px; border-radius: 10px; background: #dfe4f2; text-align: center; line-height: 24px; color: #565b70; font-size: 13px; }
.clear { margin-left: 15px; color: #d92d20; }
.second { padding-top: 19px; border: 0; }
.row { display: flex; justify-content: space-between; height: 34px; line-height: 34px; padding: 0 6px 0 4px; color: #50556a; }
.row i { color: #6a7590; } .row.off { padding: 0 6px 0 5px; } .row.off span { color: #a6adc8; }
.row.picked { height: 30px; margin-top: 2px; line-height: 28px; border: 1px solid #7b87d9; border-radius: 3px; background: #e8eaff; padding: 0 5px 0 3px; }
.issues { width: 1118px; padding: 24px 24px 0 72px; }
.bulk { display: flex; align-items: center; height: 36px; margin-bottom: 24px; }
.cb { flex: none; width: 16px; height: 16px; border: 1px solid #5d6cd0; border-radius: 2px; background: #fff; }
.bulk .cb { margin: 2px 8px 0 1px; }
.bulk-btn { width: 119px; height: 36px; border: 1px solid #c3cae2; border-radius: 8px; background: #eff2f9; color: #a6adc8; font-weight: 600; line-height: 34px; text-align: center; }
.lbl { color: #6a7590; margin-top: -1px; }
.sel-l { width: 96px; margin-left: 362px; } .nav-l { width: 122px; margin-left: 20px; }
.key { width: 20px; height: 20px; border-radius: 2px; background: #e1e6f3; margin-right: 4px; display: flex; align-items: center; justify-content: center; }
.key i { border: 4px solid transparent; }
.key .k-up { border-bottom-color: #2a2f40; border-top: 0; } .key .k-dn { border-top-color: #2a2f40; border-bottom: 0; }
.key .k-lf { border-right-color: #2a2f40; border-left: 0; } .key .k-rt { border-left-color: #2a2f40; border-right: 0; }
.tot, .eff { margin-top: -1px; letter-spacing: .1px; }
.tot { margin-left: 27px; width: 79px; } .tot b, .eff b { font-weight: 600; }
.path { height: 20px; margin-bottom: 8px; line-height: 20px; color: #6a7590; }
.login { letter-spacing: -.07px; }
.card { position: relative; height: 143px; margin-bottom: 32px; border: 1px solid #dcdde1; border-radius: 4px; background: #fff; display: flex; padding: 15px 11px 0 16px; }
.card.current { border: 2px solid #5d6cd0; padding: 14px 10px 0 15px; }
.card .cb { margin: 5px 11px 0 0; }
.card-body { flex: 1; }
.r1, .r2, .r3 { display: flex; align-items: center; justify-content: space-between; height: 20px; }
.r1 a { font-weight: 600; color: #5d6cd0; border-bottom: 1px solid #9aa5ee; line-height: 16px; }
.attr { width: 93px; height: 20px; border-radius: 10px; background: #e8eaff; color: #5d6cd0; font-size: 12px; font-weight: 600; line-height: 20px; text-align: center; }
.r2 { height: 38px; padding: 16px 0 0; margin-bottom: 16px; align-items: flex-start; }
.pill { width: 120px; height: 22px; border: 1px solid #fadc79; border-radius: 11px; background: #fcf5e4; color: #a4702a; font-size: 12px; line-height: 20px; padding-left: 8px; display: flex; align-items: center; justify-content: space-between; padding-right: 10px; }
.pill svg { color: #b0752a; }
.tags { margin-left: auto; font-size: 12px; line-height: 20px; letter-spacing: .1px; color: #6a7590; }
.add { width: 16px; height: 20px; margin-left: 4px; border-radius: 2px; background: #eff2f9; color: #2a2f40; font-size: 11px; line-height: 20px; text-align: center; }
.r3 { border-top: 1px solid #e6e7ea; height: 56px; justify-content: flex-start; padding-left: 6px; color: #3e4357; }
.ring { width: 14px; height: 14px; margin-right: 4px; border: 1.500px solid #c3cde8; border-radius: 50%; }
.r3 > svg { margin-left: 3px; }
.assignee { margin-left: 22px; }
.meta { margin-left: auto; display: flex; align-items: center; font-size: 12px; color: #6a7590; }
.meta i { width: 5px; height: 5px; border-radius: 50%; background: #c3cae2; margin: 0 4px; }
.meta svg { color: #a0a8c4; margin-right: 2px; }
.tooltip { position: absolute; left: 87px; top: 11px; width: 404px; height: 38px; border: 1px solid #333; border-right-color: #999; border-bottom: 0; background: #fff; color: #404040; font: 18px/37px "Open Sans", sans-serif; letter-spacing: -.43px; padding-left: 11px; white-space: nowrap; }
.foot { height: 59px; background: #f3f3f3; border-top: 1px solid #e3e3e3; padding: 10px 0 0 677px; overflow: hidden; }
.warn { width: 982px; height: 80px; display: flex; border: 1px solid #faebcc; background: #fdf7e2; color: #6f4f17; font-family: "Liberation Sans", sans-serif; }
.warn-ico { width: 33px; border-right: 1px solid #faebcc; padding: 31px 0 0 9px; }
.warn-text { padding: 10px 0 0 16px; white-space: nowrap; }
.warn-text h3 { margin: 0; font-size: 16px; font-weight: 400; line-height: 20px; }
.warn-text p { margin: 0; font-size: 12px; line-height: 23px; }

/* taskbar */
.taskbar { flex: none; height: 72px; background: linear-gradient(90deg, #20251b, #23231c 50%, #1f2818); border-top: 2px solid #434740; display: flex; align-items: flex-start; font-family: "Open Sans", sans-serif; color: #fff; }
.weather { position: relative; margin: 7px 0 0 33px; width: 38px; }
.weather span { position: absolute; left: 14px; top: 1px; width: 24px; height: 24px; border-radius: 50%; background: #c42b1c; font-size: 16px; line-height: 24px; text-align: center; }
.apps { margin-left: 411px; display: flex; padding-top: 4px; }
.app { position: relative; width: 66.100px; height: 61px; padding: 13px 0 0 15px; }
.run::after { content: ""; position: absolute; left: 29px; bottom: 3px; width: 9px; height: 5px; border-radius: 3px; background: #9b9b96; }
.now { isolation: isolate; }
.now::before { content: ""; position: absolute; z-index: -1; left: 3px; top: 0; width: 60px; height: 61px; border-radius: 7px; background: #33372c; border: 1px solid #3a3d33; }
.now::after { left: 21px; bottom: 2px; width: 24px; background: #4cc2ff; }
.badge { position: absolute; left: 35px; top: 5px; }
.z { width: 24px; height: 24px; border-radius: 50%; background: #445a66; color: #cfd6da; font-size: 14px; font-weight: 600; line-height: 24px; text-align: center; }
.mail { position: absolute; left: 35px; top: 5px; }
.tm { position: absolute; left: 15px; top: 21px; width: 19px; color: #4b53bc; font-size: 14px; font-weight: 700; line-height: 19px; text-align: center; }
.new { position: absolute; left: 26px; top: 37px; width: 25px; height: 12px; border-radius: 2px; background: #29e3e3; color: #000; font-size: 9px; font-weight: 700; line-height: 12px; text-align: center; }
.tray { display: flex; align-items: center; height: 68px; margin-left: 101px; }
.y1 { margin-right: 26px; } .y2 { margin-right: 27px; }
.eng { width: 62px; font-size: 17px; letter-spacing: -.3px; }
.y3 { margin-right: 12px; } .y4 { margin-right: 12px; }
.clock { width: 99px; display: flex; flex-direction: column; align-items: flex-end; font-size: 17px; line-height: 24px; letter-spacing: -.1px; }
.y6 { margin-left: 12px; }
.copilot { position: relative; margin-left: 27px; }
.copilot span { position: absolute; left: 8px; top: 22px; width: 27px; height: 13px; border-radius: 3px; background: #fcc800; color: #1a1a00; font-size: 10px; font-weight: 700; line-height: 13px; text-align: center; }
```
